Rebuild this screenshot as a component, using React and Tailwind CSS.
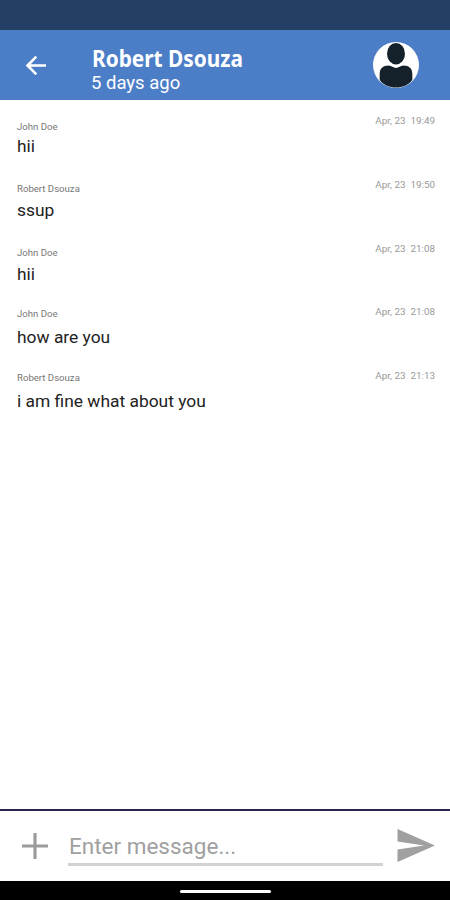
import React, { useState } from "react";

const messages = [
  { id: 1, sender: "John Doe", text: "hii", time: "Apr, 23  19:49", gap: "gap-0" },
  { id: 2, sender: "Robert Dsouza", text: "ssup", time: "Apr, 23  19:50", gap: "gap-0.5" },
  { id: 3, sender: "John Doe", text: "hii", time: "Apr, 23  21:08", gap: "gap-0.5" },
  { id: 4, sender: "John Doe", text: "how are you", time: "Apr, 23  21:08", gap: "gap-1" },
  { id: 5, sender: "Robert Dsouza", text: "i am fine what about you", time: "Apr, 23  21:13", gap: "gap-1" },
];

const Header = () => (
  <header className="flex h-[70px] shrink-0 items-center bg-[#4c7ec8] text-white">
    <button aria-label="Back" className="ml-[25px] h-5 w-[22px]">
      <svg viewBox="0 0 22 20" className="h-5 w-[22px]" fill="none" stroke="currentColor" strokeWidth="2.6">
        <path d="M21 10.500H2.500M11.300 1.700L2.500 10.500l8.800 8.800" />
      </svg>
    </button>
    <div className="ml-[45px] flex-1 pt-[10px]">
      <h1 className="origin-left scale-x-[0.905] font-['Noto_Sans'] text-[23px] leading-[26px] font-bold whitespace-nowrap">
        Robert Dsouza
      </h1>
      <p className="-ml-px text-[18.5px] leading-[25px]">5 days ago</p>
    </div>
    <svg viewBox="0 0 46 46" className="mr-[31px] size-[46px]">
      <circle cx="23" cy="23" r="23" fill="#fff" />
      <ellipse cx="23" cy="11.7" rx="9" ry="10.800" fill="#14212b" />
      <path
        d="M6.700 38V32C6.700 26.500 10 23.600 15.500 23.600C18.500 23.600 20.500 26 23 26C25.500 26 27.500 23.600 30.500 23.600C36 23.600 39.300 26.500 39.300 32V38C36 43 29 45.500 23 45.500C17 45.500 10 43 6.700 38Z"
        fill="#14212b"
      />
    </svg>
  </header>
);

const Message = ({ message }) => (
  <li className="flex h-[63.8px] items-start justify-between">
    <div className={`flex h-[50px] flex-col justify-end ${message.gap}`}>
      <span className="text-[9.6px] leading-[14px] text-[#777]">{message.sender}</span>
      <span className="text-[17.4px] leading-6 text-[#222]">{message.text}</span>
    </div>
    <time className="mt-[6px] text-[9.9px] leading-[14px] whitespace-pre text-[#999]">{message.time}</time>
  </li>
);

const Composer = () => {
  const [text, setText] = useState("");

  return (
    <form
      onSubmit={(e) => e.preventDefault()}
      className="flex h-[72px] shrink-0 items-start border-t-2 border-[#29234f] bg-white"
    >
      <button type="button" aria-label="Add attachment" className="mt-[22px] ml-[22px] size-[26px]">
        <svg viewBox="0 0 26 26" className="size-[26px]" stroke="#9b9b9b" strokeWidth="3.2">
          <path d="M13 0V26M0 13H26" />
        </svg>
      </button>
      <input
        value={text}
        onChange={(e) => setText(e.target.value)}
        placeholder="Enter message..."
        className="mt-[17px] ml-5 h-[38px] w-[315px] border-b-[3px] border-[#d2d2d2] pl-px text-[22.5px] text-[#222] outline-none placeholder:text-[#a0a0a0]"
      />
      <button type="submit" aria-label="Send" className="mt-[18px] ml-[14px] h-[33px] w-[38px]">
        <svg viewBox="0 0 38 33" className="h-[33px] w-[38px]" fill="#a0a0a0">
          <path d="M0.500 0L38 16.500L0.500 33V20.500L27 16.500L0.500 12.500Z" />
        </svg>
      </button>
    </form>
  );
};

const App = () => (
  <div className="flex h-[900px] w-[450px] flex-col overflow-hidden bg-white font-[Roboto,sans-serif]">
    <div className="h-[30px] shrink-0 bg-[#243f66]" />
    <Header />
    <ul className="flex-1 pt-2 pr-[15px] pl-[17px]">
      {messages.map((message) => (
        <Message key={message.id} message={message} />
      ))}
    </ul>
    <Composer />
    <div className="flex h-[19px] shrink-0 justify-center bg-black pt-[9px]">
      <div className="h-[3px] w-[91px] rounded-full bg-white" />
    </div>
  </div>
);

export default App;
